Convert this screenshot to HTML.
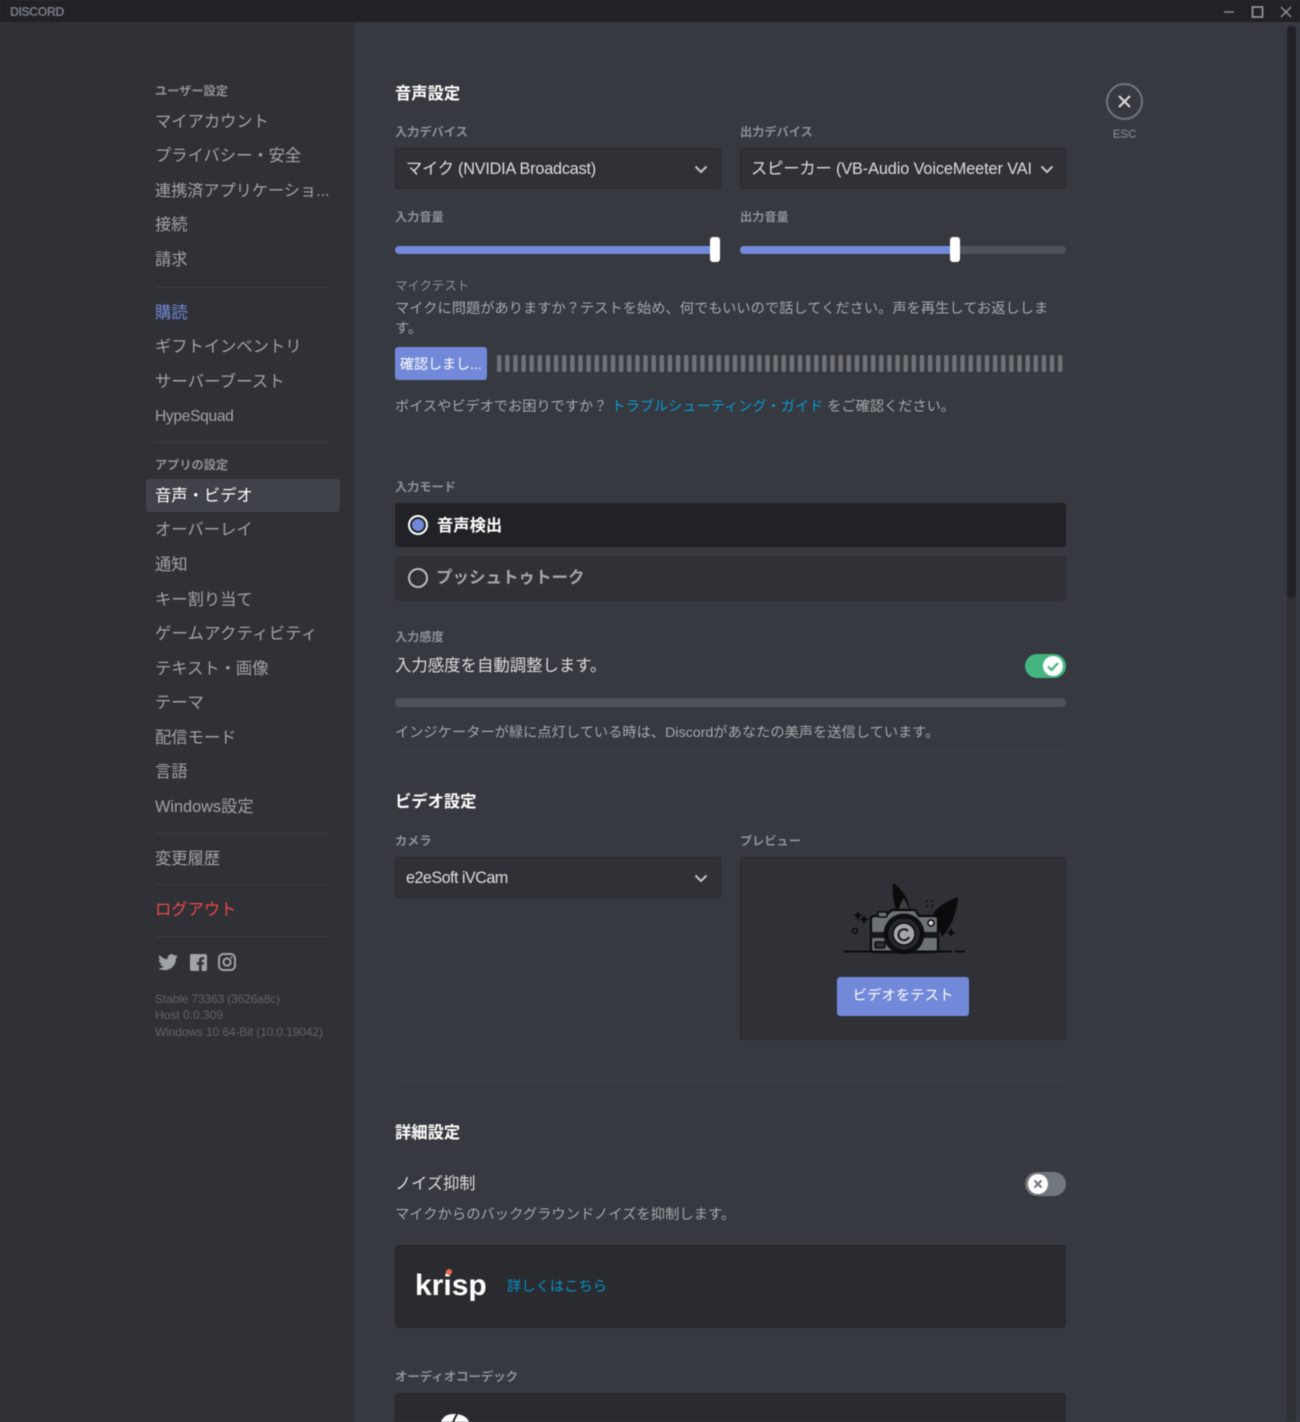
<!DOCTYPE html>
<html lang="ja"><head><meta charset="utf-8"><style>
html,body{margin:0;padding:0;width:1300px;height:1422px;overflow:hidden;background:#36393f}
body{position:relative;font-family:"Liberation Sans","Noto Sans CJK JP",sans-serif}
#root{position:absolute;left:0;top:0;width:1300px;height:1422px;overflow:hidden;filter:blur(.5px)}
.a{position:absolute}
.t{position:absolute;white-space:nowrap;line-height:20px;height:20px}
.n{font-size:16.3px;color:#a0a3a7;left:155px}
.h{font-size:12.2px;color:#8e9297;font-weight:700}
.s{font-size:16.3px;color:#fff;font-weight:700;left:395px}
.l{font-size:12.2px;color:#8e9297;font-weight:700}
.p{font-size:14.25px;color:#a4a7ab}
.dv{position:absolute;height:1px;background:#3b3e44}
.sep{position:absolute;height:1px;background:#3e4147;left:395px;width:671px}
.sel{position:absolute;height:41px;background:#2f3136;border:1px solid #292b2f;border-radius:3px;box-sizing:border-box}
.sel .t{left:10px;top:10px;font-size:16.2px;color:#dcddde}
.sel svg{position:absolute;right:11px;top:12px}
</style></head><body><div id="root">
<div class="a" style="left:0;top:0;width:1300px;height:22px;background:#202225"></div>
<div class="t" style="left:10px;top:2px;font-size:12.5px;font-weight:700;color:#72767d;letter-spacing:-.55px">DISCORD</div>
<svg class="a" style="left:1220px;top:3px" width="80" height="18" fill="none" stroke="#8e9297" stroke-width="1.4"><path d="M4 9H14"/><rect x="32.5" y="4" width="10" height="10" stroke-width="1.8"/><path d="M61 4L71 14M71 4L61 14"/></svg>

<div class="a" style="left:0;top:22px;width:354px;height:1400px;background:#2f3136"></div>
<div class="a" style="left:1287px;top:26px;width:9px;height:1396px;background:#2e3136;border-radius:4px"></div>
<div class="a" style="left:1287px;top:26px;width:9px;height:572px;background:#202225;border-radius:4px"></div>

<div class="t h" style="left:155px;top:81px">ユーザー設定</div>
<div class="t n" style="top:112px">マイアカウント</div>
<div class="t n" style="top:146px">プライバシー・安全</div>
<div class="t n" style="top:181px;font-size:16.15px">連携済アプリケーショ...</div>
<div class="t n" style="top:215px">接続</div>
<div class="t n" style="top:250px">請求</div>
<div class="dv" style="left:155px;top:287px;width:175px"></div>
<div class="t n" style="top:303px;color:#7289da">購読</div>
<div class="t n" style="top:337px">ギフトインベントリ</div>
<div class="t n" style="top:372px;letter-spacing:.2px">サーバーブースト</div>
<div class="t n" style="top:407px;font-size:15.6px;letter-spacing:-.33px">HypeSquad</div>
<div class="dv" style="left:155px;top:442px;width:175px"></div>
<div class="t h" style="left:155px;top:455px">アプリの設定</div>
<div class="a" style="left:146px;top:479px;width:194px;height:33px;background:#3f4248;border-radius:3px"></div>
<div class="t n" style="top:486px;color:#fff">音声・ビデオ</div>
<div class="t n" style="top:520px">オーバーレイ</div>
<div class="t n" style="top:555px">通知</div>
<div class="t n" style="top:590px">キー割り当て</div>
<div class="t n" style="top:624px;letter-spacing:.3px">ゲームアクティビティ</div>
<div class="t n" style="top:659px">テキスト・画像</div>
<div class="t n" style="top:693px">テーマ</div>
<div class="t n" style="top:728px">配信モード</div>
<div class="t n" style="top:762px">言語</div>
<div class="t n" style="top:797px">Windows設定</div>
<div class="dv" style="left:155px;top:833px;width:175px"></div>
<div class="t n" style="top:849px">変更履歴</div>
<div class="dv" style="left:155px;top:884px;width:175px"></div>
<div class="t n" style="top:900px;color:#f04747">ログアウト</div>
<div class="dv" style="left:155px;top:936px;width:175px"></div>
<svg class="a" style="left:158px;top:952px" width="20" height="20" viewBox="0 0 24 24" fill="#a0a3a7"><path d="M23.5 5c-.9.4-1.8.6-2.7.8 1-.6 1.7-1.500 2.100-2.700-.9.600-2 1-3 1.200A4.800 4.800 0 0 0 11.700 8.700C7.700 8.500 4.100 6.600 1.700 3.600c-1.300 2.200-.6 5 1.500 6.400-.8 0-1.500-.2-2.200-.6 0 2.300 1.600 4.300 3.900 4.800-.7.200-1.500.2-2.200.1.600 2 2.400 3.300 4.500 3.400A9.700 9.700 0 0 1 .5 19.600 13.700 13.700 0 0 0 21.600 7.400c1-.6 1.700-1.500 1.900-2.400z"/></svg>
<svg class="a" style="left:190px;top:954px" width="17" height="17" viewBox="0 0 17 17"><rect width="17" height="17" rx="2" fill="#a0a3a7"/><path d="M11.600 17V10.700H13.800L14.100 8.200H11.600V6.700C11.600 6 11.800 5.500 12.900 5.500H14.200V3.200C13.600 3.100 13 3.100 12.300 3.100 10.300 3.100 9 4.300 9 6.400V8.200H6.900V10.700H9V17Z" fill="#2f3136"/></svg>
<svg class="a" style="left:218px;top:953px" width="18" height="18" viewBox="0 0 18 18" fill="none" stroke="#a0a3a7" stroke-width="2"><rect x="1" y="1" width="16" height="16" rx="4.500"/><circle cx="9" cy="9" r="3.600"/><circle cx="13.500" cy="4.500" r=".5" fill="#a0a3a7" stroke-width="1"/></svg>
<div class="t" style="left:155px;top:989px;font-size:12px;color:#5f6369;letter-spacing:-.14px">Stable 73363 (3626a8c)</div>
<div class="t" style="left:155px;top:1005px;font-size:12px;color:#5f6369">Host 0.0.309</div>
<div class="t" style="left:155px;top:1022px;font-size:12px;color:#5f6369;letter-spacing:-.12px">Windows 10 64-Bit (10.0.19042)</div>

<div class="t s" style="top:84px">音声設定</div>
<div class="t l" style="left:395px;top:122px">入力デバイス</div>
<div class="t l" style="left:740px;top:122px">出力デバイス</div>
<div class="sel" style="left:395px;top:148px;width:326px"><div class="t" style="letter-spacing:-.18px">マイク (NVIDIA Broadcast)</div><svg width="16" height="16" fill="none" stroke="#c4c6c9" stroke-width="2"><path d="M2.500 5.500L8 11L13.500 5.500"/></svg></div>
<div class="sel" style="left:740px;top:148px;width:326px"><div class="t" style="letter-spacing:-.07px">スピーカー (VB-Audio VoiceMeeter VAI</div><svg width="16" height="16" fill="none" stroke="#c4c6c9" stroke-width="2" style="right:10px"><path d="M2.500 5.500L8 11L13.500 5.500"/></svg></div>
<div class="t l" style="left:395px;top:207px">入力音量</div>
<div class="t l" style="left:740px;top:207px">出力音量</div>
<div class="a" style="left:395px;top:246px;width:325px;height:8px;background:#7289da;border-radius:4px"></div>
<div class="a" style="left:710px;top:237px;width:10px;height:25px;background:#fff;border-radius:3px"></div>
<div class="a" style="left:740px;top:246px;width:326px;height:8px;background:#4f5258;border-radius:4px"></div>
<div class="a" style="left:740px;top:246px;width:215px;height:8px;background:#7289da;border-radius:4px 0 0 4px"></div>
<div class="a" style="left:950px;top:237px;width:10px;height:25px;background:#fff;border-radius:3px"></div>
<div class="t l" style="left:395px;top:276px;font-weight:400;font-size:12.4px">マイクテスト</div>
<div class="t p" style="left:395px;top:299px">マイクに問題がありますか？テストを始め、何でもいいので話してください。声を再生してお返ししま</div>
<div class="t p" style="left:395px;top:319px">す。</div>
<div class="a" style="left:395px;top:347px;width:92px;height:33px;background:#7289da;border-radius:3px"></div>
<div class="t" style="left:400px;top:354px;font-size:14px;color:#fff">確認しまし...</div>
<svg class="a" style="left:497px;top:355px" width="566" height="18"><defs><pattern id="b" width="8.130" height="18" patternUnits="userSpaceOnUse"><rect width="4.400" height="17" rx="1.500" fill="#6f7377"/></pattern></defs><rect width="566" height="18" fill="url(#b)"/></svg>
<div class="t p" style="left:395px;top:397px;font-size:14.2px">ボイスやビデオでお困りですか？ <span style="color:#0a9ad6">トラブルシューティング・ガイド</span> をご確認ください。</div>
<div class="sep" style="top:436px"></div>

<div class="t l" style="left:395px;top:477px">入力モード</div>
<div class="a" style="left:395px;top:503px;width:671px;height:44px;background:#202225;border-radius:3px"></div>
<div class="a" style="left:408px;top:515px;width:20px;height:20px;box-sizing:border-box;border:2px solid #fff;border-radius:50%"></div>
<div class="a" style="left:412px;top:519px;width:12px;height:12px;background:#7289da;border-radius:50%"></div>
<div class="t" style="left:437px;top:516px;font-size:16.3px;font-weight:700;color:#fff">音声検出</div>
<div class="a" style="left:395px;top:556px;width:671px;height:45px;background:#2f3136;border-radius:3px"></div>
<div class="a" style="left:408px;top:568px;width:20px;height:20px;box-sizing:border-box;border:2px solid #b9bbbe;border-radius:50%"></div>
<div class="t" style="left:436px;top:568px;font-size:16.5px;font-weight:700;color:#a4a7ab">プッシュトゥトーク</div>
<div class="t l" style="left:395px;top:627px">入力感度</div>
<div class="t" style="left:395px;top:656px;font-size:16.4px;color:#dcddde">入力感度を自動調整します。</div>
<div class="a" style="left:1025px;top:654px;width:41px;height:24px;background:#43b581;border-radius:12px"></div>
<div class="a" style="left:1043px;top:656px;width:20px;height:20px;background:#fff;border-radius:50%"></div>
<svg class="a" style="left:1043px;top:656px" width="20" height="20" fill="none" stroke="#43b581" stroke-width="2.200"><path d="M5 10.500L8.500 14L15 7"/></svg>
<div class="a" style="left:395px;top:698px;width:671px;height:9px;background:#4f5258;border-radius:4px"></div>
<div class="t p" style="left:395px;top:723px;letter-spacing:-.01px">インジケーターが緑に点灯している時は、Discordがあなたの美声を送信しています。</div>
<div class="sep" style="top:751px"></div>

<div class="t s" style="top:792px">ビデオ設定</div>
<div class="t l" style="left:395px;top:831px">カメラ</div>
<div class="t l" style="left:740px;top:831px">プレビュー</div>
<div class="sel" style="left:395px;top:857px;width:326px"><div class="t" style="letter-spacing:-.55px">e2eSoft iVCam</div><svg width="16" height="16" fill="none" stroke="#c4c6c9" stroke-width="2"><path d="M2.500 5.500L8 11L13.500 5.500"/></svg></div>
<div class="a" style="left:740px;top:857px;width:326px;height:183px;box-sizing:border-box;background:#2f3136;border:1px solid #292b2f;border-radius:3px"></div>
<svg class="a" style="left:840px;top:878px" width="130" height="84" viewBox="840 878 130 84">
<path d="M893 883C901 888 907 896 910 909L896 909C893 900 892 892 893 883Z" fill="#0a0b0c"/>
<path d="M958 897C957 912 952 926 942 937L933 914C938 906 947 901 958 897Z" fill="#0a0b0c"/>
<path d="M899 909C900 904 902 900 904 898L909 909Z" fill="#3b3e43"/>
<path d="M871 919C871 917 873 916 874 916L885 916L892 910H915L919 916L934 916C937 916 938 917 938 919V949C938 951 937 952 935 952H874C872 952 871 951 871 949Z" fill="#6d7277" stroke="#0a0b0c" stroke-width="2.200"/>
<rect x="871" y="932" width="67" height="6" fill="#17181a"/>
<rect x="878" y="912" width="9" height="5" rx="1" fill="#6d7277" stroke="#0a0b0c" stroke-width="1.500"/>
<rect x="875" y="942" width="10" height="6" rx="1.500" fill="#2f3136" stroke="#0a0b0c" stroke-width="1.500"/>
<circle cx="904" cy="934" r="20.500" fill="#0f1012"/>
<circle cx="904" cy="934" r="16.500" fill="#26282c" stroke="#0a0b0c" stroke-width="1.500"/>
<circle cx="904" cy="934" r="11" fill="#a3a6aa" stroke="#0a0b0c" stroke-width="1.500"/>
<path d="M908 931A5.500 5.500 0 1 0 909 937" fill="none" stroke="#17181a" stroke-width="2"/>
<circle cx="931" cy="923" r="3" fill="#d4d6d8" stroke="#0a0b0c" stroke-width="1.500"/>
<path d="M844 951.500H965" stroke="#0a0b0c" stroke-width="2"/>
<path d="M955 951.500H952" stroke="#2f3136" stroke-width="3"/>
<circle cx="855" cy="931" r="2.500" fill="none" stroke="#0a0b0c" stroke-width="1.500"/>
<path d="M858 911l1.500 3 3 1.500-3 1.500-1.500 3-1.500-3-3-1.500 3-1.500ZM864 915l1.500 3 3 1.500-3 1.500-1.500 3-1.500-3-3-1.500 3-1.500ZM951 928l1.500 3 3 1.500-3 1.500-1.500 3-1.500-3-3-1.500 3-1.500Z" fill="#0a0b0c"/>
<path d="M926 901h2M931 901h2M926 906h2M931 906h2" stroke="#0a0b0c" stroke-width="1.500"/>
</svg>
<div class="a" style="left:837px;top:977px;width:132px;height:39px;background:#7289da;border-radius:3px"></div>
<div class="t" style="left:837px;top:986px;width:132px;text-align:center;font-size:14.400px;color:#fff">ビデオをテスト</div>
<div class="sep" style="top:1080px"></div>

<div class="t s" style="top:1123px">詳細設定</div>
<div class="t" style="left:395px;top:1174px;font-size:16.2px;color:#dcddde">ノイズ抑制</div>
<div class="a" style="left:1025px;top:1172px;width:41px;height:24px;background:#72767d;border-radius:12px"></div>
<div class="a" style="left:1028px;top:1174px;width:20px;height:20px;background:#fff;border-radius:50%"></div>
<svg class="a" style="left:1028px;top:1174px" width="20" height="20" fill="none" stroke="#72767d" stroke-width="2.200"><path d="M6.500 6.500L13.500 13.500M13.500 6.500L6.500 13.500"/></svg>
<div class="t p" style="left:395px;top:1205px;font-size:14.3px">マイクからのバックグラウンドノイズを抑制します。</div>
<div class="a" style="left:395px;top:1245px;width:671px;height:83px;box-sizing:border-box;background:#292b2f;border:1px solid #26282b;border-radius:4px"></div>
<div class="t" style="left:415px;top:1274px;font-size:30px;font-weight:700;color:#fff;letter-spacing:0;line-height:24px;height:24px">krisp</div>
<div class="a" style="left:446px;top:1269px;width:6px;height:6px;background:#f26b50;border-radius:50%"></div>
<div class="t" style="left:507px;top:1277px;font-size:14.300px;color:#0a8fc9">詳しくはこちら</div>
<div class="t l" style="left:395px;top:1367px;font-size:12.400px">オーディオコーデック</div>
<div class="a" style="left:395px;top:1393px;width:671px;height:40px;box-sizing:border-box;background:#292b2f;border:1px solid #26282b;border-radius:4px"></div>
<svg class="a" style="left:440px;top:1412px" width="30" height="10"><path d="M1 10C3 4 8 2 14 2C20 2 27 4 29 10Z" fill="#fff"/><path d="M13 10L17 2" stroke="#292b2f" stroke-width="2"/></svg>

<div class="a" style="left:1106px;top:83px;width:37px;height:37px;box-sizing:border-box;border:2px solid #72767d;border-radius:50%"></div>
<svg class="a" style="left:1116px;top:93px" width="17" height="17" fill="none" stroke="#dcddde" stroke-width="2"><path d="M3 3L14 14M14 3L3 14"/></svg>
<div class="t" style="left:1106px;top:124px;width:37px;text-align:center;font-size:12px;font-weight:700;color:#72767d;letter-spacing:-.3px">ESC</div>
</div></body></html>
